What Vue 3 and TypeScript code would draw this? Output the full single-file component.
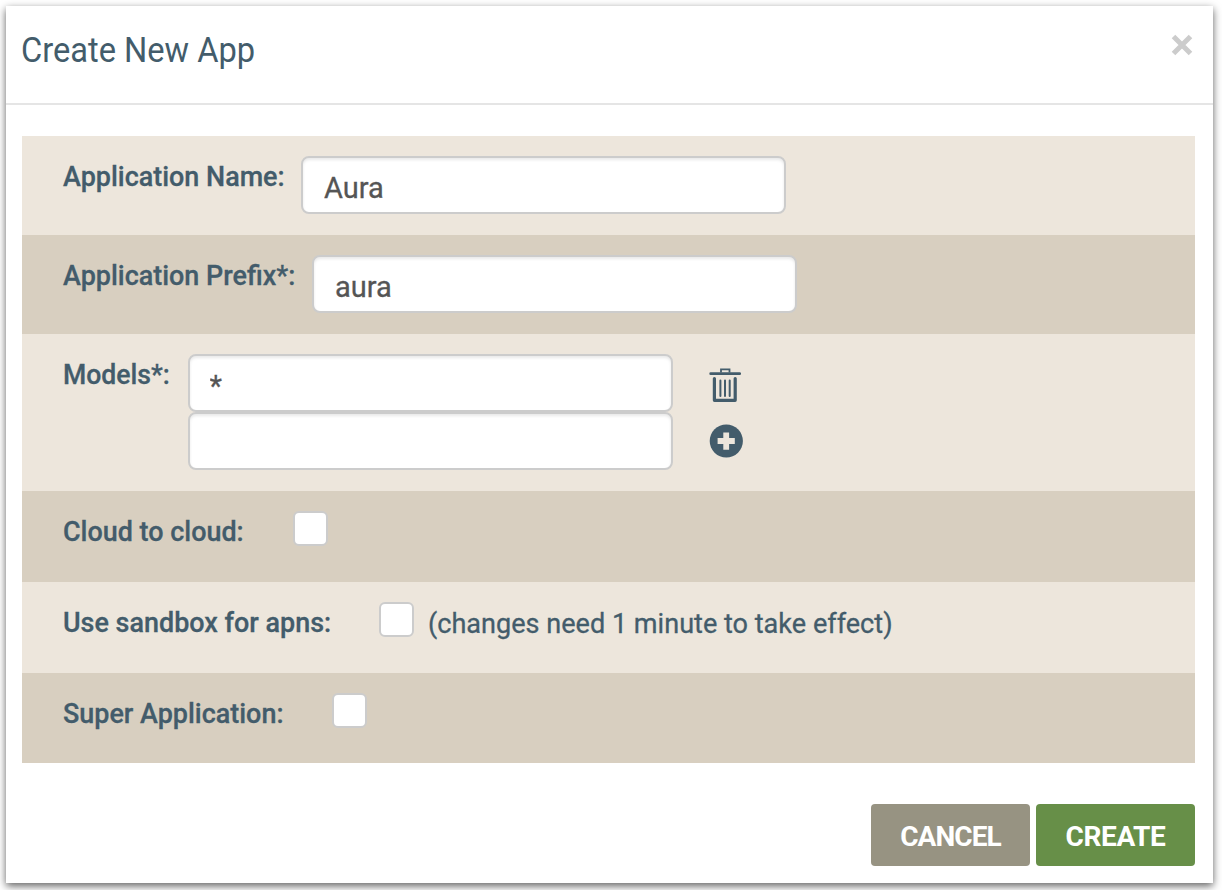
<script setup lang="ts">
import { ref } from 'vue'

const appName = ref('Aura')
const appPrefix = ref('aura')
const models = ref(['*', ''])
const cloud = ref(false)
const sandbox = ref(false)
const superApp = ref(false)
</script>

<template>
  <main class="stage">
    <section class="dialog" role="dialog" aria-labelledby="dialog-title">
      <header class="header">
        <h1 id="dialog-title" class="title">Create New App</h1>
        <button class="close" type="button" aria-label="Close">
          <svg width="22" height="22" viewBox="0 0 22 22">
            <path d="M2.5 2.5 19.5 19.5M19.5 2.5 2.5 19.5" stroke="#cccccc" stroke-width="5" fill="none" />
          </svg>
        </button>
      </header>
      <form class="form" @submit.prevent>
        <div class="row">
          <label class="label name-label" for="app-name">Application Name:</label>
          <input id="app-name" v-model="appName" class="field inset" type="text" />
        </div>
        <div class="row dark">
          <label class="label prefix-label" for="app-prefix">Application Prefix*:</label>
          <input id="app-prefix" v-model="appPrefix" class="field inset" type="text" />
        </div>
        <div class="row tall">
          <label class="label models-label" for="model-0">Models*:</label>
          <div class="models">
            <input v-for="(_, i) in models" :id="`model-${i}`" :key="i" v-model="models[i]" class="field" type="text" />
          </div>
          <div class="actions">
            <svg class="trash" width="32" height="36" viewBox="0 0 32 36" fill="none" stroke="#435c6b">
              <path d="M12 4.5V1.3H20.5V4.5" stroke-width="1.8" />
              <path d="M1.7 5.7H30.7" stroke-width="2.8" stroke-linecap="round" />
              <path d="M5.4 10.5V32.3H26.2V10.5" stroke-width="3.2" stroke-linecap="round" stroke-linejoin="round" />
              <path d="M11.4 12.5V28M16 12.5V28M20.7 12.5V28" stroke-width="2" stroke-linecap="round" />
            </svg>
            <svg class="add" width="34" height="34" viewBox="0 0 34 34">
              <circle cx="17.3" cy="17" r="16.6" fill="#435c6b" />
              <path d="M14.3 8.5H20.1V14H25.8V20H20.1V25.8H14.3V20H8.6V14H14.3Z" fill="#ede6dc" />
            </svg>
          </div>
        </div>
        <div class="row short dark">
          <label class="label cloud-label" for="cloud">Cloud to cloud:</label>
          <input id="cloud" v-model="cloud" class="check" type="checkbox" />
        </div>
        <div class="row short">
          <label class="label sandbox-label" for="sandbox">Use sandbox for apns:</label>
          <input id="sandbox" v-model="sandbox" class="check" type="checkbox" />
          <span class="hint">(changes need 1 minute to take effect)</span>
        </div>
        <div class="row short last dark">
          <label class="label super-label" for="super">Super Application:</label>
          <input id="super" v-model="superApp" class="check" type="checkbox" />
        </div>
        <footer class="footer">
          <button class="btn cancel" type="button">CANCEL</button>
          <button class="btn create" type="submit">CREATE</button>
        </footer>
      </form>
    </section>
  </main>
</template>

<style>
body {
  background: #fff;
  overflow: hidden;
}
</style>

<style scoped>
* {
  box-sizing: border-box;
}
.stage {
  height: 890px;
  padding: 6px 9px 7px 6px;
  overflow: hidden;
  font-family: Roboto, "Liberation Sans", sans-serif;
  color: #435c6b;
}
.dialog {
  height: 877px;
  background: #fff;
  box-shadow: 0 3px 8px rgba(0, 0, 0, 0.62);
}
.header {
  display: flex;
  justify-content: space-between;
  height: 99px;
  padding: 0 20px 0 15px;
  border-bottom: 2px solid #e5e5e5;
}
.title {
  margin: 24px 0 0;
  font-size: 34.5px;
  font-weight: 400;
  line-height: 40px;
  transform: scaleX(0.945);
  transform-origin: left;
}
.close {
  width: 22px;
  height: 22px;
  margin-top: 28px;
  padding: 0;
  border: 0;
  background: none;
}
.close svg,
.actions svg {
  display: block;
}
.form {
  padding: 31px 18px 0 16px;
}
.row {
  display: flex;
  align-items: flex-start;
  height: 99px;
  padding: 20px 0 0 40.5px;
  background: #ede6dc;
}
.row.dark {
  background: #d8cfc0;
}
.row.tall {
  height: 157px;
}
.row.short {
  height: 91px;
}
.row.last {
  height: 90px;
}
.label {
  flex: none;
  margin-top: 3.5px;
  font-size: 28px;
  font-weight: 500;
  line-height: 34px;
  white-space: nowrap;
  transform: scaleX(0.962);
  transform-origin: left;
  -webkit-text-stroke: 0.3px currentColor;
}
.name-label {
  width: 238.5px;
}
.prefix-label {
  width: 249.5px;
}
.models-label {
  width: 125px;
}
.models-label {
  transform: scaleX(0.95);
}
.cloud-label {
  width: 230.5px;
}
.sandbox-label {
  width: 316.5px;
}
.super-label {
  width: 269.5px;
}
.field {
  display: block;
  width: 485px;
  height: 58px;
  margin: 0;
  padding: 5px 20px 0;
  border: 2px solid #ccc;
  border-radius: 8px;
  background: #fff;
  box-shadow: inset 0 2px 3px rgba(0, 0, 0, 0.09);
  color: #555;
  font: 400 29px Roboto, "Liberation Sans", sans-serif;
  -webkit-text-stroke: 0.3px currentColor;
  outline: none;
}
.inset {
  padding-left: 21px;
}
.models {
  display: grid;
}
.actions {
  display: grid;
  gap: 20px;
  margin: 14px 0 0 36.5px;
}
.check {
  appearance: none;
  width: 35px;
  height: 35px;
  margin: 0;
  border: 2px solid #ccc;
  border-radius: 6px;
  background: #fff;
}
.hint {
  margin: 5px 0 0 14px;
  font-size: 28px;
  line-height: 34px;
  white-space: nowrap;
  transform: scaleX(0.967);
  transform-origin: left;
  -webkit-text-stroke: 0.3px currentColor;
}
.footer {
  display: flex;
  justify-content: flex-end;
  gap: 6px;
  margin-top: 41px;
}
.btn {
  width: 159px;
  height: 62px;
  padding: 3px 0 0;
  border: 0;
  border-radius: 4px;
  color: #fff;
  font: 700 28px Roboto, "Liberation Sans", sans-serif;
}
.cancel {
  background: #979382;
  letter-spacing: -0.9px;
}
.create {
  background: #678f48;
  letter-spacing: -0.4px;
}
</style>
